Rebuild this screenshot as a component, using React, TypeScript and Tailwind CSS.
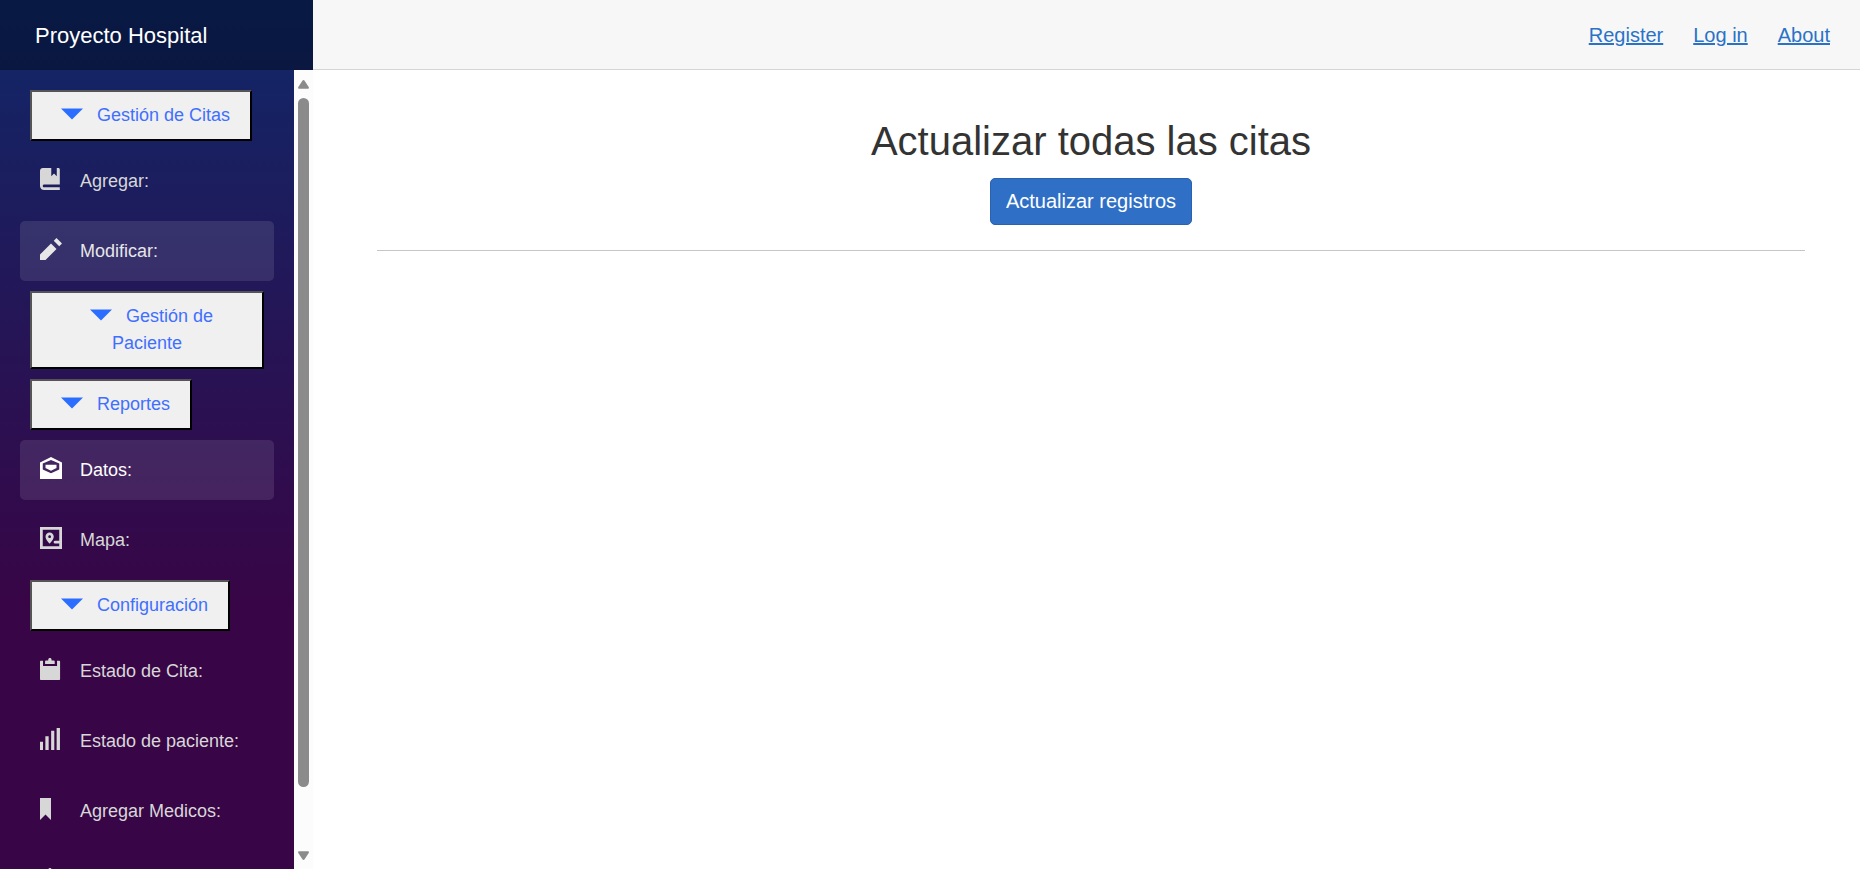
import React from "react";

const icons = {
  caret: "M0 2l4 4 4-4h-8z",
  book: "M1 0c-.55 0-1 .45-1 1v5.5c0 .83.67 1.5 1.5 1.5h5.7v-1h-5.7c-.28 0-.5-.22-.5-.5s.22-.5.5-.5h5.7v-5.5c0-.28-.22-.5-.5-.5h-.6v3l-1-1-1 1v-3h-3.1z",
  pencil: "M6 0l-1 1 2 2 1-1-2-2zm-2 2l-4 4v2h2l4-4-2-2z",
  envelope: "M4 0l-4 2v6h8v-6l-4-2zM4 1.1l3 1.3v2.1l-3 1.4-3-1.4v-2.1zM2 2.8h4v1.2l-2 1-2-1z",
  map: "M0 0v8h8v-8h-8zm1 1h6v4h-1.5a.5.5 0 0 0-.09 0 .5.5 0 1 0 .09 1h1.5v1h-6v-6zm2.5 1c-.83 0-1.5.67-1.5 1.5 0 1 1.5 2.5 1.5 2.5s1.5-1.5 1.5-2.5c0-.83-.67-1.5-1.5-1.5zm0 1c.28 0 .5.22.5.5s-.22.5-.5.5-.5-.22-.5-.5.22-.5.5-.5z",
  clipboard:
    "M.25 1c-.14 0-.25.11-.25.25v6.5c0 .14.11.25.25.25h6.8c.14 0 .25-.11.25-.25v-6.5c0-.14-.11-.25-.25-.25h-.85v1.9h-5.1v-1.9zM3.6 0c-.35 0-.6.25-.6.55v.4h-.75c-.2 0-.4.15-.4.35v.85h3.5v-.85c0-.2-.2-.35-.4-.35h-.75v-.4c0-.3-.25-.55-.6-.55z",
  signal: "M6.05 0v8h1.2v-8zM4.05 1v7h1.15v-7zM1.95 3v5h1.2v-5zM0 5v3h1.1v-3z",
  bookmark: "M0 0v8l2-2 2 2v-8h-4z",
};

function Icon({ name }: { name: keyof typeof icons }) {
  return (
    <svg viewBox="0 0 8 8" fill="currentColor" fillRule="evenodd" aria-hidden="true" className="size-[22px] shrink-0">
      <path d={icons[name]} />
    </svg>
  );
}

function GroupButton({ label }: { label: string }) {
  return (
    <li className="mx-2.5">
      <button
        type="button"
        className="border-2 border-t-[#555] border-l-[#555] border-r-black border-b-black bg-[#f0f0f0] px-5 py-2.5 text-center text-[18px] leading-[27px] text-[#3f6fff]"
      >
        <span className="inline-flex h-[27px] w-10 items-center justify-center pb-1 align-top text-[#2a6dff]">
          <Icon name="caret" />
        </span>{" "}
        {label}
      </button>
    </li>
  );
}

function NavItem({ icon, label, tone = "" }: { icon: keyof typeof icons; label: string; tone?: string }) {
  return (
    <li>
      <a href="#" className={`flex h-[60px] items-center rounded-[5px] px-5 text-[18px] ${tone || "text-[#d7d7d7]"}`}>
        <span className="flex w-10 pb-1">
          <Icon name={icon} />
        </span>
        {label}
      </a>
    </li>
  );
}

function ScrollTrack() {
  return (
    <div aria-hidden="true" className="flex w-[19px] shrink-0 flex-col items-center bg-[#fcfcfc] text-[#8b8b8b]">
      <div className="flex h-7 shrink-0 items-center">
        <svg viewBox="0 0 11 9" fill="currentColor" className="h-[9px] w-[11px]">
          <path d="M5.5 0Q6.1 0 6.6.7L10.7 7Q11.4 8.7 10 8.7H1Q-.4 8.7.3 7L4.4.7Q4.9 0 5.5 0Z" />
        </svg>
      </div>
      <div className="min-h-0 flex-1 pb-[54px]">
        <div className="h-full w-[11px] rounded-full bg-current" />
      </div>
      <div className="flex h-7 shrink-0 items-center">
        <svg viewBox="0 0 11 9" fill="currentColor" className="h-[9px] w-[11px]">
          <path d="M5.5 9Q6.1 9 6.6 8.3L10.7 2Q11.4.3 10 .3H1Q-.4.3.3 2L4.4 8.3Q4.9 9 5.5 9Z" />
        </svg>
      </div>
    </div>
  );
}

export default function App() {
  return (
    <div className="flex h-screen overflow-hidden bg-white font-['Liberation_Sans',Arial,sans-serif] text-[20px] leading-[30px] text-[#333]">
      <aside className="flex w-[313px] shrink-0 flex-col bg-[linear-gradient(180deg,#0f2869_0%,#380546_70%)]">
        <div className="flex h-[70px] shrink-0 items-center bg-[#000816]/45 pt-0.5 pl-[35px]">
          <a href="#" className="text-[22px] text-white">
            Proyecto Hospital
          </a>
        </div>
        <div className="flex min-h-0 flex-1">
          <nav className="min-w-0 flex-1 overflow-hidden">
            <ul className="flex flex-col gap-2.5 px-5 pt-5">
              <GroupButton label="Gestión de Citas" />
              <NavItem icon="book" label="Agregar:" />
              <NavItem icon="pencil" label="Modificar:" tone="bg-white/10 text-[#e6e6e6]" />
              <GroupButton label="Gestión de Paciente" />
              <GroupButton label="Reportes" />
              <NavItem icon="envelope" label="Datos:" tone="bg-white/10 text-white" />
              <NavItem icon="map" label="Mapa:" />
              <GroupButton label="Configuración" />
              <NavItem icon="clipboard" label="Estado de Cita:" />
              <NavItem icon="signal" label="Estado de paciente:" />
              <NavItem icon="bookmark" label="Agregar Medicos:" />
              <li className="flex h-[60px] items-center px-5 pb-1 text-[#d7d7d7]">
                <Icon name="clipboard" />
              </li>
            </ul>
          </nav>
          <ScrollTrack />
        </div>
      </aside>

      <main className="flex min-w-0 flex-1 flex-col">
        <header className="flex h-[70px] shrink-0 items-center justify-end gap-[30px] border-b border-[#d6d5d5] bg-[#f7f7f7] px-[30px] text-[#2a72c8]">
          <a href="#" className="underline decoration-2 underline-offset-1">
            Register
          </a>
          <a href="#" className="underline decoration-2 underline-offset-1">
            Log in
          </a>
          <a href="#" className="underline decoration-2 underline-offset-1">
            About
          </a>
        </header>
        <article className="flex flex-col items-center pt-[47px] pr-[55px] pl-16">
          <h1 className="mb-[13px] text-[40px] leading-[48px]">Actualizar todas las citas</h1>
          <button
            type="button"
            className="h-[47px] rounded-[5px] border border-[#2862b0] bg-[#2f6fc6] px-[15px] pb-0.5 text-white"
          >
            Actualizar registros
          </button>
          <hr className="mt-[25px] w-full border-[#c6c6c6]" />
        </article>
      </main>
    </div>
  );
}
